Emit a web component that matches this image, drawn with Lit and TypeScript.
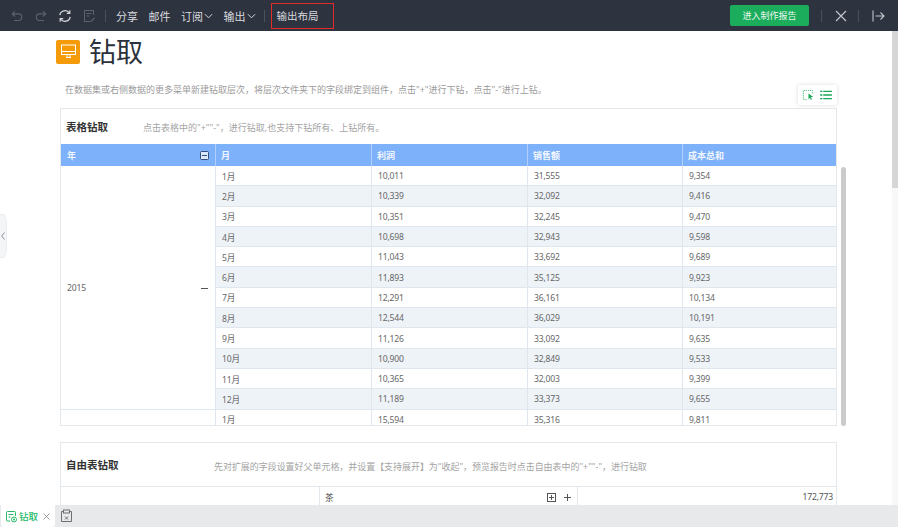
import { LitElement, html, css, svg } from "lit";
import { customElement } from "lit/decorators.js";

const rows = [
  ["1月", "10,011", "31,555", "9,354"],
  ["2月", "10,339", "32,092", "9,416"],
  ["3月", "10,351", "32,245", "9,470"],
  ["4月", "10,698", "32,943", "9,598"],
  ["5月", "11,043", "33,692", "9,689"],
  ["6月", "11,893", "35,125", "9,923"],
  ["7月", "12,291", "36,161", "10,134"],
  ["8月", "12,544", "36,029", "10,191"],
  ["9月", "11,126", "33,092", "9,635"],
  ["10月", "10,900", "32,849", "9,533"],
  ["11月", "10,365", "32,003", "9,399"],
  ["12月", "11,189", "33,373", "9,655"],
];

const chevron = svg`<svg class="chev" viewBox="0 0 10 6" width="9" height="6"><path d="M1 1l4 4 4-4" fill="none" stroke="currentColor" stroke-width="1.1"/></svg>`;

@customElement("app-root")
export class AppRoot extends LitElement {
  static styles = css`
    :host { display: flex; flex-direction: column; width: 898px; height: 527px; overflow: hidden; position: relative; background: #fff;
      font-family: "Noto Sans", "Noto Sans CJK SC", sans-serif; color: #666; }
    * { box-sizing: border-box; }
    .toolbar { flex: none; height: 31px; background: #2e3340; display: flex; align-items: center; color: #d8dade; font-size: 11px; }
    .icons { display: flex; align-items: center; gap: 10px; padding-left: 10px; }
    .icons svg { display: block; }
    .sep { width: 1px; height: 12px; background: #4c515d; flex: none; }
    .sep.first { margin-left: 9px; }
    .sep.second { margin-left: 8px; }
    .menu { display: flex; align-items: center; gap: 10.5px; margin-left: 10px; }
    .menu span { display: inline-flex; align-items: center; gap: 1px; }
    .outlined { margin-left: 6px; height: 26px; width: 63px; border: 1px solid #e32b2b; display: flex; align-items: center; padding-left: 5px; font-size: 10.5px; white-space: nowrap; }
    .spacer { flex: 1; }
    .enter { width: 79px; height: 21px; border-radius: 2px; background: #1bad5b; color: #e9f7ef; font-size: 9px; display: flex; align-items: center; justify-content: center; margin-right: 12px; white-space: nowrap; }
    .right-icons { display: flex; align-items: center; padding-right: 13px; }
    .x { margin: 0 11px 0 13px; }
    .ext { margin-left: 13px; }

    .main { flex: 1; min-height: 0; position: relative; overflow: hidden; padding: 0 61px 0 60px; }
    .heading { display: flex; align-items: center; height: 40px; gap: 9px; margin-left: -4px; padding-top: 1px; }
    .logo { width: 24px; height: 24px; border-radius: 2px; background: #f59b0a; display: flex; align-items: center; justify-content: center; }
    .heading h1 { margin: 0; font-weight: 400; font-size: 27px; color: #2b323c; line-height: 38px; }
    .intro { font-size: 9px; color: #9b9b9b; margin: 12px 0 0 5px; line-height: 14px; height: 25px; white-space: nowrap; }

    .card { border: 1px solid #e3e8ed; width: 777px; background: #fff; }
    .card-head { display: flex; align-items: center; height: 35px; padding-left: 5px; }
    .card-head strong { font-size: 10.5px; font-weight: 700; color: #333; width: 77px; flex: none; }
    .card-head span { font-size: 9px; color: #a4a4a4; white-space: nowrap; margin-top: 1px; }
    .viewport { height: 281px; overflow: hidden; }
    .grid { display: grid; grid-template-columns: 154px 156px 156px 155px 154px; grid-auto-rows: 20.3px; }
    .th { height: 22px; background: #7db1fa; color: #f2f7ff; font-size: 9px; font-weight: 700; display: flex; align-items: center; padding-left: 5px; border-left: 1px solid #b1cffa; }
    .th:first-child { border-left: 0; justify-content: space-between; padding: 0 6px; }
    .headrow { display: grid; grid-template-columns: 154px 156px 156px 155px 154px; }
    .td { font-size: 8.6px; letter-spacing: -0.2px; display: flex; align-items: center; padding: 1px 0 0 6px; border-left: 1px solid #dfe6ed; border-bottom: 1px solid #dfe6ed; color: #666; white-space: nowrap; }
    .td.alt { background: #eef3f8; }
    .year { grid-row: span 12; border-left: 0; justify-content: space-between; padding: 2px 7px 0 6px; background: #fff; }
    .blank { border-left: 0; }
    .dash { width: 7px; height: 1px; background: #555; }

    .free { margin-top: 16px; }
    .free .card-head { height: 44px; border-bottom: 1px solid #e3e8ed; }
    .free .card-head strong { width: 148px; margin-top: -1px; }
    .free .card-head span { margin-top: 4px; font-size: 8.96px; }
    .free-row { display: grid; grid-template-columns: 258px 258px 259px; height: 24px; font-size: 8.6px; }
    .free-row > div { display: flex; align-items: center; border-left: 1px solid #e3e8ed; padding: 0 3px 4px 5px; }
    .free-row > div:first-child { border-left: 0; }
    .free-row > .tea { justify-content: space-between; color: #444; padding-right: 5px; }
    .tea .tools { display: flex; align-items: center; gap: 7px; }
    .num { justify-content: flex-end; color: #555; letter-spacing: -0.2px; }

    .tabbar { flex: none; height: 22px; background: #e8e9ea; display: flex; align-items: stretch; }
    .tab { width: 54px; margin-left: 1px; background: #fff; border-radius: 0 0 3px 3px; display: flex; align-items: center; padding-left: 4px; gap: 1px; color: #25b968; font-size: 9.5px; font-weight: 500; white-space: nowrap; }
    .tab .close { margin-left: 4px; color: #888; display: flex; }
    .addtab { margin-left: 5px; display: flex; align-items: center; }

    .handle { position: absolute; left: 0; top: 183px; width: 7px; height: 44px; background: #f3f5f7; border-radius: 0 4px 4px 0 / 0 10px 10px 0; display: flex; align-items: center; justify-content: flex-end; padding-right: 1px; border: 1px solid #e9edf0; border-left: 0; }
    .toolbox { position: absolute; left: 798px; top: 54px; width: 39px; height: 20px; background: #fff; border-radius: 2px; box-shadow: 0 0 4px rgba(0,0,0,.14); display: flex; align-items: center; gap: 6px; padding-left: 4px; }
    .inner-thumb { position: absolute; left: 841px; top: 136px; width: 5px; height: 259px; border-radius: 3px; background: #cbcbcb; }
    .page-track { position: absolute; left: 892px; top: 0; width: 6px; height: 100%; background: #f8f8f8; }
    .page-thumb { position: absolute; left: 892px; top: 0; width: 6px; height: 157px; background: #d6d6d6; }
  `;

  render() {
    return html`
      <div class="toolbar">
        <div class="icons">
          <svg width="14" height="14" viewBox="0 0 14 14" fill="none" stroke="#5d626d" stroke-width="1.1"><path d="M5 2.2L2.3 4.9 5 7.5M2.5 4.9h6a3 3 0 010 6.6H4"/></svg>
          <svg width="14" height="14" viewBox="0 0 14 14" fill="none" stroke="#5d626d" stroke-width="1.1"><path d="M9 2.2l2.7 2.7L9 7.5M11.5 4.9h-6a3 3 0 000 6.6H10"/></svg>
          <svg width="14" height="14" viewBox="0 0 14 14" fill="none" stroke="#d5d7db" stroke-width="1.2"><path d="M1.8 6.2A5.3 5.3 0 0111.4 4M12.2 7.8A5.3 5.3 0 012.6 10"/><path d="M11.8 1.3V4.3H8.8M2.2 12.7V9.7H5.2"/></svg>
          <svg width="14" height="14" viewBox="0 0 14 14" fill="none" stroke="#5d626d" stroke-width="1.1"><path d="M11.5 6V1.5h-9v11h6M4.500 4.500h5M4.500 7h3M9 12.500l3.500-3.500"/></svg>
        </div>
        <div class="sep first"></div>
        <div class="menu">
          <span>分享</span><span>邮件</span><span>订阅${chevron}</span><span>输出${chevron}</span>
        </div>
        <div class="sep second"></div>
        <div class="outlined">输出布局</div>
        <div class="spacer"></div>
        <div class="enter">进入制作报告</div>
        <div class="right-icons">
          <div class="sep"></div>
          <svg class="x" width="12" height="12" viewBox="0 0 12 12" stroke="#c4c6ca" stroke-width="1.2"><path d="M1 1l10 10M11 1L1 11"/></svg>
          <div class="sep"></div>
          <svg class="ext" width="13" height="12" viewBox="0 0 13 12" fill="none" stroke="#c4c6ca" stroke-width="1.1"><path d="M1 .5v11M3.500 6H12M8.500 2.500L12 6l-3.500 3.500"/></svg>
        </div>
      </div>

      <div class="main">
        <div class="heading">
          <div class="logo">
            <svg width="17" height="17" viewBox="0 0 17 17" fill="none" stroke="#fff" stroke-width="1"><rect x="1.500" y="2" width="14" height="9.500"/><path d="M1.500 8.500h14M6 14.500h5M7 11.500v3M10 11.500v3"/></svg>
          </div>
          <h1>钻取</h1>
        </div>
        <div class="intro">在数据集或右侧数据的更多菜单新建钻取层次，将层次文件夹下的字段绑定到组件，点击"+"进行下钻，点击"-"进行上钻。</div>

        <div class="card">
          <div class="card-head"><strong>表格钻取</strong><span>点击表格中的"+""-"，进行钻取,也支持下钻所有、上钻所有。</span></div>
          <div class="viewport">
            <div class="headrow">
              <div class="th">年
                <svg width="9" height="9" viewBox="0 0 9 9"><rect x=".5" y=".5" width="8" height="8" rx="1" fill="#dce9fb" stroke="#35507a"/><path d="M2 4.500h5" stroke="#35507a"/></svg>
              </div>
              <div class="th">月</div><div class="th">利润</div><div class="th">销售额</div><div class="th">成本总和</div>
            </div>
            <div class="grid">
              <div class="td year">2015<i class="dash"></i></div>
              ${rows.map((r, i) => r.map((c) => html`<div class="td ${i % 2 ? "alt" : ""}">${c}</div>`))}
              <div class="td blank"></div>
              <div class="td">1月</div><div class="td">15,594</div><div class="td">35,316</div><div class="td">9,811</div>
            </div>
          </div>
        </div>

        <div class="card free">
          <div class="card-head"><strong>自由表钻取</strong><span>先对扩展的字段设置好父单元格，并设置【支持展开】为"收起"，预览报告时点击自由表中的"+""-"，进行钻取</span></div>
          <div class="free-row">
            <div></div>
            <div class="tea">茶
              <span class="tools">
                <svg width="9" height="9" viewBox="0 0 9 9" fill="none" stroke="#555"><rect x=".5" y=".5" width="8" height="8"/><path d="M2 4.500h5M4.500 2v5"/></svg>
                <svg width="9" height="9" viewBox="0 0 9 9" fill="none" stroke="#555"><path d="M1 4.500h7M4.500 1v7"/></svg>
              </span>
            </div>
            <div class="num">172,773</div>
          </div>
        </div>

        <div class="handle">
          <svg width="4" height="8" viewBox="0 0 4 8" fill="none" stroke="#8a9099"><path d="M3.500 .5L.7 4l2.800 3.500"/></svg>
        </div>
        <div class="toolbox">
          <svg width="12" height="12" viewBox="0 0 13 13" fill="none"><path d="M5 11.500H1.500v-10h10V5" stroke="#3dbb73" stroke-dasharray="1.3 1"/><path d="M7 5l5 3.500-2.300.5 1 2.500-1 .5-1-2.400L7 11z" fill="#1ca85a"/></svg>
          <svg width="12" height="10" viewBox="0 0 13 11" stroke="#1ca85a" stroke-width="1.6"><path d="M0 1.500h2.500M3.500 1.500H13M0 5.500h2.500M3.500 5.500H13M0 9.500h2.500M3.500 9.500H13"/></svg>
        </div>
        <div class="inner-thumb"></div>
        <div class="page-track"></div>
        <div class="page-thumb"></div>
      </div>

      <div class="tabbar">
        <div class="tab">
          <svg width="13" height="13" viewBox="0 0 13 13" fill="none" stroke="#25b968"><path d="M5 11H2.500a1 1 0 01-1-1V2.500a1 1 0 011-1h7a1 1 0 011 1V6M3.500 4.500h5M3.500 7h2"/><circle cx="9" cy="9.500" r="2.500" fill="#fff"/><circle cx="9" cy="9.500" r="1" fill="#25b968" stroke="none"/></svg>
          钻取
          <span class="close"><svg width="7" height="7" viewBox="0 0 7 7" stroke="currentColor" stroke-width=".8"><path d="M.5.5l6 6M6.500.5l-6 6"/></svg></span>
        </div>
        <div class="addtab">
          <svg width="13" height="14" viewBox="0 0 13 14" fill="none" stroke="#6d6f73"><path d="M3 2.500H1.500v10h10v-10H10"/><rect x="3.500" y="1" width="6" height="3"/><path d="M5 7.500l3 3M8 7.500l-3 3"/></svg>
        </div>
      </div>
    `;
  }
}
